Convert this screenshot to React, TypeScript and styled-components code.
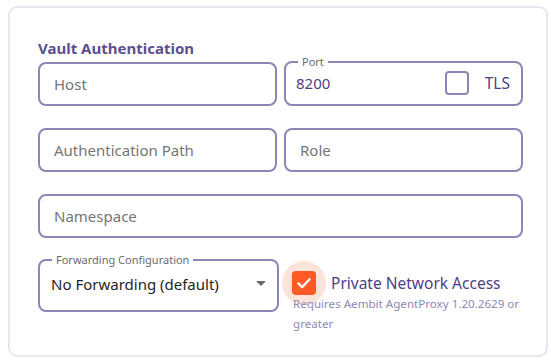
import styled, { createGlobalStyle } from "styled-components";

const GlobalStyle = createGlobalStyle`
  html, body {
    margin: 0;
    padding: 0;
    background: #fff;
    font-family: "Noto Sans", "Open Sans", sans-serif;
  }
  * { box-sizing: border-box; }
`;

const Page = styled.div`
  padding: 6px 3px 4px 8px;
`;

const Card = styled.section`
  width: 540px;
  height: 351px;
  border: 2px solid #e8e6ee;
  border-radius: 9px;
  padding: 30px 23px 0 28px;
  display: flex;
  flex-direction: column;
`;

const Title = styled.h2`
  margin: 0 0 4px 0;
  font-size: 15px;
  font-weight: 700;
  color: #5c4f92;
  line-height: 20px;
`;

const Row = styled.div<{ $cols?: number; $mb?: number }>`
  display: grid;
  grid-template-columns: ${({ $cols = 2 }) => ($cols === 2 ? "1fr 1fr" : "1fr")};
  column-gap: 7px;
  align-items: start;
  margin-bottom: ${({ $mb = 22 }) => $mb}px;
`;

const Field = styled.fieldset<{ $h?: number; $legend?: boolean }>`
  margin: ${({ $legend }) => ($legend ? "-6px 0 0 0" : "0")};
  height: ${({ $h = 44, $legend }) => $h + ($legend ? 6 : 0)}px;
  border: 2px solid #8e85b6;
  border-radius: 8px;
  padding: 0 13px 0 14px;
  display: flex;
  align-items: center;
  min-width: 0;
`;

const Legend = styled.legend`
  font-size: 11px;
  color: #6b6b6b;
  padding: 0 4px;
  margin-left: -2px;
  line-height: 12px;
`;

const Placeholder = styled.span`
  font-size: 15px;
  color: #757575;
  line-height: 20px;
`;

const Value = styled.span<{ $dark?: boolean }>`
  font-size: 15px;
  color: ${({ $dark }) => ($dark ? "#1f1f1f" : "#4d4185")};
  line-height: 20px;
  flex: 1;
`;

const PortInner = styled.div`
  display: flex;
  align-items: center;
  flex: 1;
  margin-top: -7px;
  margin-left: -4px;
  margin-right: -2px;
`;

const SmallBox = styled.span`
  width: 24px;
  height: 24px;
  border: 2px solid #8e85b6;
  border-radius: 4px;
  margin-right: 16px;
`;

const TlsText = styled.span`
  font-size: 15.5px;
  color: #4d4185;
`;

const SelectInner = styled.div`
  display: flex;
  align-items: center;
  flex: 1;
  margin-top: -9px;
  margin-left: -3px;
`;

const Arrow = styled.span`
  width: 0;
  height: 0;
  border-left: 5px solid transparent;
  border-right: 5px solid transparent;
  border-top: 5px solid #6b6b6b;
  margin-right: -2px;
`;

const BottomRow = styled.div`
  display: grid;
  grid-template-columns: 241px 1fr;
  column-gap: 3px;
  align-items: start;
`;

const CheckWrap = styled.div`
  display: grid;
  grid-template-columns: 49px 1fr;
  align-items: center;
  padding-top: 1px;
`;

const Halo = styled.span`
  width: 44px;
  height: 44px;
  border-radius: 50%;
  background: #fde3da;
  display: flex;
  align-items: center;
  justify-content: center;
`;

const CheckBox = styled.span`
  width: 24px;
  height: 24px;
  border-radius: 4px;
  background: #ff5a24;
  display: flex;
  align-items: center;
  justify-content: center;
`;

const CheckLabel = styled.span`
  font-size: 15.5px;
  color: #4d4185;
  line-height: 20px;
`;

const Hint = styled.p`
  grid-column: 1 / span 2;
  margin: -11px 0 0 11px;
  font-size: 11.6px;
  line-height: 20px;
  color: #8f87b6;
  width: 236px;
`;

export default function App() {
  return (
    <>
      <GlobalStyle />
      <Page>
        <Card>
          <Title>Vault Authentication</Title>
          <Row>
            <Field>
              <Placeholder>Host</Placeholder>
            </Field>
            <Field $legend>
              <Legend>Port</Legend>
              <PortInner>
                <Value>8200</Value>
                <SmallBox />
                <TlsText>TLS</TlsText>
              </PortInner>
            </Field>
          </Row>
          <Row>
            <Field>
              <Placeholder>Authentication Path</Placeholder>
            </Field>
            <Field>
              <Placeholder>Role</Placeholder>
            </Field>
          </Row>
          <Row $cols={1}>
            <Field>
              <Placeholder>Namespace</Placeholder>
            </Field>
          </Row>
          <BottomRow>
            <Field $h={52} $legend>
              <Legend>Forwarding Configuration</Legend>
              <SelectInner>
                <Value $dark>No Forwarding (default)</Value>
                <Arrow />
              </SelectInner>
            </Field>
            <CheckWrap>
              <Halo>
                <CheckBox>
                  <svg width="18" height="18" viewBox="0 0 24 24" fill="none">
                    <path d="M4.5 12.5l5 5L19.5 7" stroke="#fff" strokeWidth="3" strokeLinecap="round" strokeLinejoin="round" />
                  </svg>
                </CheckBox>
              </Halo>
              <CheckLabel>Private Network Access</CheckLabel>
              <Hint>Requires Aembit AgentProxy 1.20.2629 or greater</Hint>
            </CheckWrap>
          </BottomRow>
        </Card>
      </Page>
    </>
  );
}
